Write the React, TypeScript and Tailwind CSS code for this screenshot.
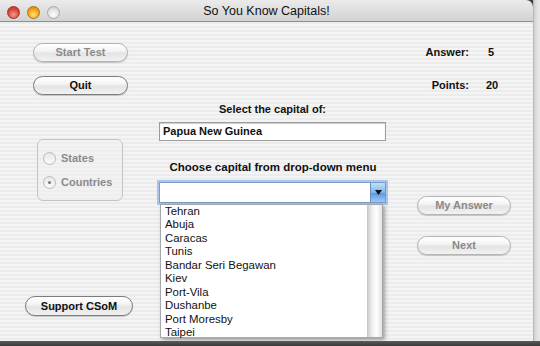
import React from "react";

const capitals = [
  "Tehran",
  "Abuja",
  "Caracas",
  "Tunis",
  "Bandar Seri Begawan",
  "Kiev",
  "Port-Vila",
  "Dushanbe",
  "Port Moresby",
  "Taipei",
];

const btnBase =
  "rounded-full border flex items-center justify-center text-[11px] font-bold bg-[linear-gradient(to_bottom,#ffffff_0%,#f4f4f4_40%,#e4e4e4_55%,#f2f2f2_100%)] shadow-[0_1px_1px_rgba(0,0,0,0.18)]";
const btnEnabled = "border-[#7c7c7c] text-[#111]";
const btnDisabled = "border-[#b4b4b4] text-[#8a8a8a]";

function Radio({ checked, label }: { checked?: boolean; label: string }) {
  return (
    <div className="flex items-center h-[13px]">
      <div className="w-[13px] h-[13px] rounded-full border border-[#b8b8b8] bg-[linear-gradient(to_bottom,#e8e8e8,#fafafa)] flex items-center justify-center">
        {checked && <div className="w-[3px] h-[3px] rounded-full bg-[#777]" />}
      </div>
      <span className="ml-[5px] text-[11px] font-bold text-[#8a8a8a] leading-[13px]">{label}</span>
    </div>
  );
}

export default function App() {
  return (
    <div className="w-[540px] h-[346px] flex flex-col bg-[#3f3f3f] overflow-hidden font-['Liberation_Sans',Arial,sans-serif]">
      <div className="flex h-[341px]">
        {/* window */}
        <div className="w-[533px] flex flex-col rounded-tr-[7px] overflow-hidden">
          {/* title bar */}
          <div className="h-[22px] border-b border-[#8e8e8e] bg-[linear-gradient(to_bottom,#ebebeb,#d2d2d2)] relative flex items-center justify-center">
            <div className="absolute left-[7px] top-[6px] flex gap-[7px]">
              <div className="w-[13px] h-[13px] rounded-full border border-[#9a3030] bg-[radial-gradient(circle_at_50%_70%,#f49a8e_0%,#dc4a3e_55%,#b02a22_100%)]" />
              <div className="w-[13px] h-[13px] rounded-full border border-[#a87018] bg-[radial-gradient(circle_at_50%_70%,#ffe07a_0%,#f0a818_55%,#c47c10_100%)]" />
              <div className="w-[13px] h-[13px] rounded-full border border-[#a8a8a8] bg-[radial-gradient(circle_at_50%_70%,#ffffff_0%,#e2e2e2_55%,#c4c4c4_100%)]" />
            </div>
            <span className="text-[12.5px] text-[#111] mt-[1px]">So You Know Capitals!</span>
          </div>
          {/* content */}
          <div className="flex-1 flex bg-[repeating-linear-gradient(to_bottom,#ececec_0px,#ececec_2px,#f4f4f4_2px,#f4f4f4_4px)]">
            {/* left column */}
            <div className="w-[150px] flex flex-col">
              <div className={`${btnBase} ${btnDisabled} mt-[21px] ml-[33px] w-[95px] h-[19px]`}>Start Test</div>
              <div className={`${btnBase} ${btnEnabled} mt-[14px] ml-[33px] w-[95px] h-[19px]`}>Quit</div>
              <div className="mt-[44px] ml-[37px] w-[86px] h-[62px] rounded-[6px] border border-[#c4c4c4] bg-[#f0f0f0]/60 flex flex-col pt-[12px] pl-[5px] gap-[11px]">
                <Radio label="States" />
                <Radio label="Countries" checked />
              </div>
              <div className={`${btnBase} ${btnEnabled} mt-[95px] ml-[25px] w-[108px] h-[20px]`}>Support CSoM</div>
            </div>
            {/* center column */}
            <div className="w-[250px] flex flex-col">
              <div className="mt-[80px] ml-[9px] w-[227px] text-center text-[11px] font-bold leading-[14px] text-[#111]">
                Select the capital of:
              </div>
              <div className="mt-[6px] ml-[9px] w-[227px] h-[19px] bg-white border border-[#9c9c9c] shadow-[inset_0_1px_1px_rgba(0,0,0,0.2)] flex items-center pl-[3px] text-[11px] font-bold text-[#111]">
                Papua New Guinea
              </div>
              <div className="mt-[19px] ml-[7px] w-[232px] text-center text-[11.5px] font-bold leading-[14px] text-[#111]">
                Choose capital from drop-down menu
              </div>
              <div className="mt-[8px] ml-[9px] w-[227px] h-[21px] relative">
                <div className="w-full h-full bg-white border border-[#7a9cc8] shadow-[0_0_0_2px_rgba(110,160,225,0.55)] flex justify-end">
                  <div className="w-[15px] h-full bg-[linear-gradient(to_bottom,#c4e0fa,#7eb4ec_50%,#5a9ae2_55%,#9ccaf4)] border-l border-[#6a8fc0] flex items-center justify-center">
                    <svg width="7" height="5" viewBox="0 0 7 5">
                      <path d="M0 0 L7 0 L3.5 5 Z" fill="#111" />
                    </svg>
                  </div>
                </div>
                <div className="absolute left-[1px] top-[22px] w-[223px] h-[134px] flex bg-white border border-[#a4a8ae] shadow-[2px_2px_4px_rgba(0,0,0,0.35)]">
                  <div className="flex-1 flex flex-col pl-[4px] text-[11.4px] leading-[13.45px] text-[#111]">
                    {capitals.map((c) => (
                      <div key={c}>{c}</div>
                    ))}
                  </div>
                  <div className="w-[15px] h-full border-l border-[#c8c8c8] bg-[linear-gradient(to_right,#d0d0d0,#efefef_30%,#ffffff_60%,#e2e2e2)]" />
                </div>
              </div>
            </div>
            {/* right column */}
            <div className="flex-1 flex flex-col">
              <div className="mt-[23px] flex text-[11px] font-bold leading-[14px] text-[#111]">
                <span className="w-[69px] text-right">Answer:</span>
                <span className="ml-[19px]">5</span>
              </div>
              <div className="mt-[19px] flex text-[11px] font-bold leading-[14px] text-[#111]">
                <span className="w-[69px] text-right">Points:</span>
                <span className="ml-[17px]">20</span>
              </div>
              <div className={`${btnBase} ${btnDisabled} mt-[104px] ml-[17px] w-[94px] h-[19px]`}>My Answer</div>
              <div className={`${btnBase} ${btnDisabled} mt-[21px] ml-[17px] w-[94px] h-[19px]`}>Next</div>
            </div>
          </div>
        </div>
        {/* backdrop strip */}
        <div className="flex-1 border-l border-[#b8b8b8] bg-[linear-gradient(to_right,#cfcfcf,#e2e2e2_50%,#e8e8e8)]" />
      </div>
      <div className="h-[5px] bg-[linear-gradient(to_bottom,#5a5a5a,#3a3a3a)]" />
    </div>
  );
}
